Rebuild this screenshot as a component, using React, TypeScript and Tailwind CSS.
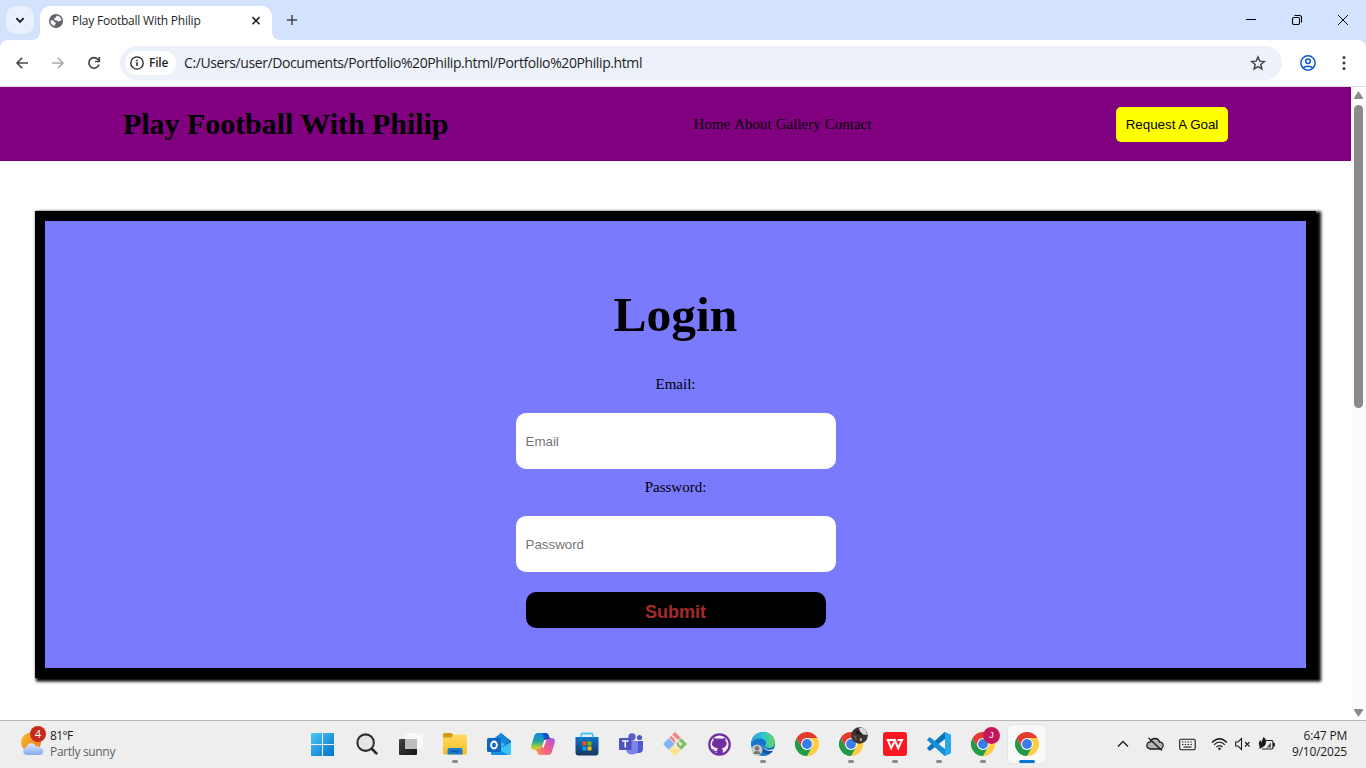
import type { ReactNode } from 'react';

const ui = "font-['Open_Sans','Noto_Sans',sans-serif]";
const serif = "font-['Liberation_Serif',serif]";
const arial = "font-['Liberation_Sans',sans-serif]";

function TabStrip() {
  return (
    <div className="flex h-10 shrink-0 items-start bg-[#d3e3fd]">
      <div className="ml-[6px] mt-[6px] flex h-7 w-7 items-center justify-center rounded-[10px] bg-[#e9f0fe]">
        <svg width="10" height="8" viewBox="0 0 10 8" fill="none" stroke="#1f1f1f" strokeWidth="1.9"><path d="M1.4 2.2L5 5.800 8.600 2.200" /></svg>
      </div>
      <div className="relative ml-[6px] mt-[6px] flex h-[34px] w-[232px] items-center rounded-t-[10px] bg-white pb-[5px] pl-[9px] pr-[10px]">
        <svg className="absolute -left-2 bottom-0" width="8" height="8"><path d="M8 0v8H0A8 8 0 0 0 8 0z" fill="#fff" /></svg>
        <svg className="absolute -right-2 bottom-0" width="8" height="8"><path d="M0 0v8h8A8 8 0 0 1 0 0z" fill="#fff" /></svg>
        <svg width="14" height="14" viewBox="0 0 14 14"><circle cx="7" cy="7" r="7" fill="#5f6368" /><path d="M8.6 1.7c-2 .2-1 1.5-2.3 2-1.1.4-1.5 1.4-.7 2.2.9.8 2.500-.1 3 1.200.3 1 1.600.6 1.900-.2l1.900-.3a5.500 5.500 0 0 0-3.800-4.900zM1.600 6.400c1.200-.2 3.300-.1 3.800 1.300.3.900 1.700.6 1.400 1.700-.3 1-1.300 1.100-1.300 2.700A5.500 5.500 0 0 1 1.600 6.400z" fill="#fff" /></svg>
        <span className={`ml-[9px] grow whitespace-nowrap text-[12px] tracking-[-0.22px] text-[#1f1f1f] ${ui}`}>Play Football With Philip</span>
        <svg width="12" height="12" viewBox="0 0 12 12" stroke="#1f1f1f" strokeWidth="1.6"><path d="M2.400 2l7.200 7.200M9.600 2L2.400 9.200" /></svg>
      </div>
      <svg className="ml-[14px] mt-[14px]" width="12" height="12" viewBox="0 0 12 12" stroke="#44474a" strokeWidth="1.5"><path d="M6 .9v10.200M.9 6h10.200" /></svg>
      <div className="grow" />
      <div className="mr-[17px] mt-[14px] flex gap-[34px]">
        <svg width="12" height="12"><path d="M1 5.500h10" stroke="#000" /></svg>
        <svg width="12" height="12" fill="none" stroke="#000" strokeWidth="1.1"><rect x="1.500" y="3.500" width="7" height="7" rx="1.500" /><path d="M3.500 1.500h5a2 2 0 0 1 2 2v5" /></svg>
        <svg width="12" height="12" stroke="#000" strokeWidth="1"><path d="M1 1l10 10M11 1L1 11" /></svg>
      </div>
    </div>
  );
}

function Toolbar() {
  return (
    <div className="flex h-[47px] shrink-0 bg-[#d3e3fd]">
      <div className="flex w-full items-center rounded-t-[8px] border-b border-[#dedfe2] bg-white">
        <svg className="ml-[15px]" width="14" height="14" viewBox="0 0 14 14" fill="none" stroke="#44474a" strokeWidth="1.600"><path d="M13 7H2.500M7.200 1.700L2 7l5.200 5.300" /></svg>
        <svg className="ml-[22px]" width="14" height="14" viewBox="0 0 14 14" fill="none" stroke="#a9abae" strokeWidth="1.600"><path d="M1 7h10.500M6.800 1.700L12 7l-5.200 5.300" /></svg>
        <svg className="ml-[22px]" width="14" height="14" viewBox="0 0 14 14" fill="none" stroke="#44474a" strokeWidth="1.700"><path d="M12 8.500a5.200 5.200 0 1 1-1-5L12.300 5" /><path d="M12.300 1v4.500H8" /></svg>
        <div className="ml-[19px] flex h-[34px] w-[1162px] items-center rounded-full bg-[#ecf1fa] pl-[5px] pr-[15px]">
          <div className="flex h-6 w-[51px] items-center rounded-full bg-white pl-[5px]">
            <svg width="14" height="14" viewBox="0 0 14 14" fill="none" stroke="#1f1f1f" strokeWidth="1.300"><circle cx="7" cy="7" r="6.200" /><path d="M7 6.200V10M7 3.800v1.400" strokeWidth="1.500" /></svg>
            <span className={`ml-[5px] text-[12px] font-semibold tracking-[-0.2px] text-[#1f1f1f] ${ui}`}>File</span>
          </div>
          <span className={`ml-[8px] grow whitespace-nowrap text-[14px] tracking-[-0.4px] pb-px text-[#1f1f1f] ${ui}`}>C:/Users/user/Documents/Portfolio%20Philip.html/Portfolio%20Philip.html</span>
          <svg width="18" height="18" viewBox="0 0 18 18" fill="none" stroke="#44474a" strokeWidth="1.500"><path d="M9 3l1.750 4.150 4.500.38-3.420 2.950 1.030 4.400L9 12.550 5.140 14.880l1.030-4.400-3.420-2.950 4.500-.38z" /></svg>
        </div>
        <svg className="ml-[18px]" width="16" height="16" viewBox="0 0 16 16" fill="none" stroke="#0b57d0" strokeWidth="1.500"><circle cx="8" cy="8" r="7.200" /><circle cx="8" cy="6.200" r="2.300" /><path d="M3 13c2.500-2.500 7.500-2.500 10 0" /></svg>
        <svg className="ml-[26px]" width="4" height="16" fill="#44474a"><circle cx="2" cy="2.500" r="1.600" /><circle cx="2" cy="8" r="1.600" /><circle cx="2" cy="13.500" r="1.600" /></svg>
      </div>
    </div>
  );
}

function Page() {
  return (
    <main className="flex min-w-0 grow flex-col bg-white text-black">
      <header className="flex h-[74px] shrink-0 items-center justify-between bg-[#800080] pl-[123px] pr-[123px]">
        <h1 className={`w-[326px] whitespace-nowrap text-[30px] font-bold leading-[34px] tracking-[-0.04px] ${serif}`}>Play Football With Philip</h1>
        <nav className={`flex gap-[4px] whitespace-nowrap text-[15px] ${serif}`}>
          <a>Home</a><a>About</a><a>Gallery</a><a>Contact</a>
        </nav>
        <button className={`h-[35px] w-[112px] whitespace-nowrap rounded-[5px] bg-[#ffff00] pt-[2px] text-[13.333px] ${arial}`}>Request A Goal</button>
      </header>
      <form className={`mx-[35px] mt-[50px] flex h-[467px] shrink-0 flex-col items-center border-[10px] border-black bg-[#7a7aff] shadow-[3px_1.5px_3px_2px_black] ${serif}`}>
        <h2 className="mt-[65px] text-[49.500px] font-bold leading-[58px]">Login</h2>
        <label className="mt-[31px] text-[15px] leading-[18px]">Email:</label>
        <input type="email" placeholder="Email" className={`mt-[20px] h-[56px] w-[320px] shrink-0 rounded-[10px] bg-white px-[10px] text-[13.333px] placeholder:text-[#757575] ${arial}`} />
        <label className="mt-[9px] text-[15px] leading-[18px]">Password:</label>
        <input type="password" placeholder="Password" className={`mt-[20px] h-[56px] w-[320px] shrink-0 rounded-[10px] bg-white px-[10px] text-[13.333px] placeholder:text-[#757575] ${arial}`} />
        <button type="button" className={`mt-[20px] flex h-[36px] w-[300px] shrink-0 items-center justify-center rounded-[10px] bg-black pt-[4px] text-[18px] font-bold text-[#a52a2a] ${arial}`}>Submit</button>
      </form>
    </main>
  );
}

function Scrollbar() {
  return (
    <div className="flex w-[15px] shrink-0 flex-col items-center bg-[#fcfcfc]">
      <svg className="mt-[4px] shrink-0" width="9" height="9"><path d="M3.800 1Q4.500 0 5.200 1L8.900 6.800Q9.300 8 8 8H1Q-.3 8 .1 6.800z" fill="#8b8b8b" /></svg>
      <div className="mt-[5px] h-[303px] w-[9px] shrink-0 rounded-full bg-[#8b8b8b]" />
      <div className="grow" />
      <svg className="mb-[3px] shrink-0" width="9" height="9"><path d="M3.800 8Q4.500 9 5.200 8L8.900 2.200Q9.300 1 8 1H1Q-.3 1 .1 2.200z" fill="#8b8b8b" /></svg>
    </div>
  );
}

function ChromeIcon() {
  return (
    <svg width="24" height="24" viewBox="0 0 48 48">
      <path d="M24 12H44.800A24 24 0 0 1 24 48L34.400 30z" fill="#ffcd40" />
      <path d="M3.200 12L13.600 30 24 36 34.400 30 24 48A24 24 0 0 1 3.200 12z" fill="#229a48" />
      <path d="M3.200 12A24 24 0 0 1 44.800 12H24L13.600 30z" fill="#e33b2e" />
      <circle cx="24" cy="24" r="12" fill="#fff" /><circle cx="24" cy="24" r="9.800" fill="#397ee8" />
    </svg>
  );
}

function Item({ children, state }: { children: ReactNode; state?: 'open' | 'active' }) {
  return (
    <div className={`relative flex h-[38px] w-[38px] shrink-0 items-center justify-center ${state === 'active' ? 'rounded-[4px] bg-[#f9f9f9] outline outline-[#e5e5e5]' : ''}`}>
      {children}
      {state === 'open' && <span className="absolute bottom-0 left-4 h-[3px] w-[6px] rounded-full bg-[#8a8a8a]" />}
      {state === 'active' && <span className="absolute bottom-0 left-[11px] h-[3px] w-4 rounded-full bg-[#0078d4]" />}
    </div>
  );
}

function Apps() {
  return (
    <div className="flex h-[38px] gap-[6px]">
      <Item>
        <svg className="mr-px" width="23" height="23"><defs><linearGradient id="win" x1="0" y1="0" x2="23" y2="23" gradientUnits="userSpaceOnUse"><stop stopColor="#4cc9f8" /><stop offset="1" stopColor="#0070cc" /></linearGradient></defs><path d="M0 0h11v11H0zM12 0h11v11H12zM0 12h11v11H0zM12 12h11v11H12z" fill="url(#win)" /></svg>
      </Item>
      <Item><svg width="22" height="22" viewBox="0 0 24 24" fill="none" stroke="#2b2b2b"><circle cx="10.500" cy="10.500" r="9" fill="#e4e6e8" strokeWidth="2.200" /><path d="M17.200 17.200l5 5" strokeWidth="3" strokeLinecap="round" /></svg></Item>
      <Item>
        <svg width="24" height="22"><defs><linearGradient id="task" x2="1" y2="1"><stop stopColor="#444" /><stop offset="1" stopColor="#161616" /></linearGradient></defs><rect y="6" width="18" height="16" rx="1" fill="url(#task)" /><rect x="6" width="18" height="16" rx="1" fill="#f8f8f8" /><path d="M6 6h12v10H6z" fill="#bdbdbd" /></svg>
      </Item>
      <Item state="open">
        <svg width="24" height="22"><defs><linearGradient id="folder" x2="0" y2="1"><stop stopColor="#ffda62" /><stop offset="1" stopColor="#f9bd23" /></linearGradient></defs><path d="M0 1.500Q0 0 1.500 0H8.500l2 2.500V8H0z" fill="#d99a0b" /><path d="M0 4.500h8.500l2-3h12Q24 1.500 24 3v17q0 1.500-1.500 1.500h-21Q0 21.500 0 20z" fill="url(#folder)" /><path d="M4.500 21.500V17Q4.500 15 6.500 15h11Q19.500 15 19.500 17v4.500z" fill="#157bd1" /><path d="M8 18.500h8" stroke="#0b5799" strokeWidth="1.500" /></svg>
      </Item>
      <Item>
        <svg width="24" height="23"><path d="M4 8L14 0l10 8v11q0 3-3 3H6q-2 0-2-2z" fill="#0a5fb8" /><path d="M5 8L14 1l8 7-8 7z" fill="#37b5ef" /><path d="M14 1l8 7-4 3.500L9 5z" fill="#1688dc" /><path d="M24 9v10q0 3-3 3H6q-2 0-2-2l10-5z" fill="#38c5f4" /><path d="M4 12l17 10H6q-2 0-2-2z" fill="#178ee5" /><rect y="5" width="14" height="14" rx="1.500" fill="#0f65c4" /><ellipse cx="7" cy="12" rx="2.900" ry="3.500" fill="none" stroke="#fff" strokeWidth="1.900" /></svg>
      </Item>
      <Item>
        <svg width="24" height="22" viewBox="0 0 24 22"><defs><linearGradient id="copA" x1="0" y1="0" x2="0" y2="1"><stop stopColor="#1782e8" /><stop offset=".5" stopColor="#20a8a0" /><stop offset=".8" stopColor="#a7ca38" /><stop offset="1" stopColor="#f7c82c" /></linearGradient><linearGradient id="copB" x1="1" y1="0" x2="0" y2="1"><stop stopColor="#a259e9" /><stop offset=".5" stopColor="#f05b8d" /><stop offset="1" stopColor="#ff974e" /></linearGradient></defs><path d="M7 0h8q2 0 2.800 2.500L19 6h-3q-2 0-2.700 2L11 14.500Q10.200 17 8 17H4Q-1 17 .4 12L3 3.500Q4 0 7 0z" fill="url(#copA)" /><path d="M17 22H9q-2 0-2.800-2.500L5 16h3q2 0 2.700-2L13 7.500Q13.800 5 16 5h4q5 0 3.600 5L21 18.500Q20 22 17 22z" fill="url(#copB)" /><path d="M12 0h3q2 0 2.800 2.500L19 6h-3q-2 0-2.700 1.500z" fill="#164fc3" /><path d="M11 14l2.300-7h2L12.500 15z" fill="#fff" /></svg>
      </Item>
      <Item>
        <svg width="24" height="24"><defs><linearGradient id="store" x2="0" y2="1"><stop stopColor="#0b74c8" /><stop offset="1" stopColor="#16365f" /></linearGradient></defs><path d="M.5 5h23v15.500q0 3-3 3h-17q-3 0-3-3z" fill="url(#store)" /><path d="M6.200 5.500V3q0-1.500 1.500-1.500h8.600q1.500 0 1.500 1.500v2.500" fill="none" stroke="#43c4f2" strokeWidth="1.800" /><path d="M7.500 9.500h4v4h-4z" fill="#f25022" /><path d="M12.500 9.500h4v4h-4z" fill="#7fba00" /><path d="M7.500 14.500h4v4h-4z" fill="#00a4ef" /><path d="M12.500 14.500h4v4h-4z" fill="#ffb900" /></svg>
      </Item>
      <Item>
        <svg width="24" height="22"><circle cx="13" cy="4" r="3.700" fill="#5b5fc7" /><circle cx="20.500" cy="4.500" r="2.600" fill="#5059c9" /><path d="M17 8h7v7.500q0 4.500-4.500 4.500H17z" fill="#5059c9" /><path d="M7 8h12v7.500q0 6-6 6t-6-6z" fill="#7b83eb" /><rect y="5" width="12.500" height="12" rx="1" fill="#4b53bc" /><path d="M3 8h6.500M6.250 8v6.500" stroke="#fff" strokeWidth="1.500" /></svg>
      </Item>
      <Item>
        <svg width="24" height="24"><path d="M12 0L17.700 5.700 12 11.400 6.300 5.700z" fill="#f2877e" /><path d="M18.300 6.300L24 12l-5.700 5.700-5.700-5.700z" fill="#80be62" /><path d="M5.700 6.300L11.400 12l-5.700 5.700L0 12z" fill="#82b3fa" /><path d="M12 12.600l5.700 5.700L12 24l-5.700-5.700z" fill="#ffe18a" /><path d="M8.500 3l4.500 4.500V16M13 7.500l4.500 4.500" fill="none" stroke="#eee" strokeWidth="1.300" /><circle cx="13" cy="7.500" r="1.500" fill="#eee" /><circle cx="17.500" cy="12" r="1.500" fill="#eee" /><circle cx="13" cy="15.800" r="1.500" fill="#eee" /></svg>
      </Item>
      <Item>
        <svg width="23" height="23"><circle cx="11.500" cy="11.500" r="10.200" fill="#f7effa" stroke="#7030a0" strokeWidth="2.300" /><path d="M5.500 7.500V4.500l3 1.300q3-.8 6 0l3-1.300v3q2.300 3 .3 5.500-1 1.800-3.800 2.200.8.800.8 2.300v4H9v-2.300q-3.500.8-4.500-2-.5-.8-1-1.200 1.500-.3 2.500 1.300 1 1.300 3 .8 0-1.200.8-2.900-6.800-.8-5.600-5.700.2-1.200 1.300-2z" fill="#7030a0" /></svg>
      </Item>
      <Item state="open">
        <svg width="24" height="24"><defs><linearGradient id="edge" y2="0"><stop stopColor="#2aa0dc" /><stop offset=".5" stopColor="#2fc4d4" /><stop offset="1" stopColor="#62d85c" /></linearGradient></defs><circle cx="12" cy="12" r="12" fill="#1374c9" /><path d="M0 12C1 4 6 0 12 0c7 0 12 5 12 10 0 4-3 6-6 6-2.500 0-4-1-4-2 0-.8 1-1 1-3 0-2.500-3-4.500-6.500-4.500C4 6.500 1 9 0 12z" fill="url(#edge)" /><path d="M10 11c-2 5 2 10 12 7q-1 2-3 3.500C12 23 7 17 10 11z" fill="#1250a0" /><path d="M11.500 10.500q-1 5 5 7.200 4 .8 7-1.200l1 1-2 1Q17 20 14 17q-3.500-2.500-2.500-6.500z" fill="#eee" /><circle cx="6" cy="18" r="5.500" fill="#c8c6c4" /><circle cx="6" cy="16.300" r="2.200" fill="#767676" /><path d="M2.500 22q0-3 3.500-3t3.500 3z" fill="#767676" /></svg>
      </Item>
      <Item><ChromeIcon /></Item>
      <Item state="open"><ChromeIcon />
        <svg className="absolute left-[19px] top-[2px]" width="17" height="17"><circle cx="8.500" cy="8.500" r="8.300" fill="#3d312e" /><path d="M8 1Q13-.5 15.500 4.500L16 8l-4-.5-3-3z" fill="#d5d8db" /><path d="M2 8l3 1 1 4-2 0z" fill="#6b5049" /><path d="M9 11l2 .5-.5 3-2-1z" fill="#b9a9a2" /><path d="M4 3l5 2 3 3-6-1z" fill="#18191b" /></svg>
      </Item>
      <Item state="open">
        <svg width="24" height="24" fill="none"><rect width="24" height="24" rx="3" fill="#ff1720" /><path d="M12 8H4.800l3.400 8.200L12 8.500l3.200 7.700L19 8h-4.500" stroke="#fff" strokeWidth="2" /></svg>
      </Item>
      <Item state="open">
        <svg width="24" height="24"><path d="M18 0l6 2.700v18.600L18 24z" fill="#29a8ef" /><path d="M18 0v7L3.500 18.500Q2.800 19 2 18.400l-1.500-1.300q-.8-.8 0-1.500L17 .6z" fill="#0873bb" /><path d="M18 24v-7L3.500 5.500Q2.800 5 2 5.600L.5 6.900q-.8.800 0 1.500L17 23.400z" fill="#168dd5" /></svg>
      </Item>
      <Item state="open"><ChromeIcon />
        <span className={`absolute left-[19px] top-[2px] flex h-[17px] w-[17px] items-center justify-center rounded-full bg-[#c2185b] text-[9px] text-white ${arial}`}>J</span>
      </Item>
      <Item state="active"><ChromeIcon /></Item>
    </div>
  );
}

function Taskbar() {
  return (
    <footer className={`flex h-[48px] shrink-0 border-t border-[#b9b9b9] bg-[#eeeeee] ${ui}`}>
      <div className="flex w-[304px] pl-[20px] pt-[7px]">
        <div className="relative h-8 w-[26px]">
          <svg width="26" height="30"><defs><linearGradient id="sun" x2="1" y2="1"><stop stopColor="#f8bd2c" /><stop offset="1" stopColor="#ee7217" /></linearGradient><linearGradient id="cloud" x2="0" y2="1"><stop stopColor="#dce9fc" /><stop offset="1" stopColor="#83aaf0" /></linearGradient></defs><circle cx="11" cy="14.500" r="10" fill="url(#sun)" /><path d="M6.500 27a4 4 0 0 1-.3-7.800Q7.500 15 11.500 15.200q3.500.2 4.500 3a4 4 0 0 1 4 1.300A3.800 3.800 0 0 1 20 27z" fill="url(#cloud)" /></svg>
          <span className="absolute -top-[2px] left-[10px] flex h-4 w-4 items-center justify-center rounded-full bg-[#c42b1c] text-[11px] text-white">4</span>
        </div>
        <div className="ml-[4px] text-[12px] leading-4 text-[#1b1b1b]"><div className="tracking-[-0.6px]">81°F</div><div className="tracking-[-0.33px] text-[#5f5f5f]">Partly sunny</div></div>
      </div>
      <div className="pt-[4px]"><Apps /></div>
      <div className="grow" />
      <div className="flex items-center pb-[1px] pr-[19px]">
        <svg width="12" height="12" fill="none" stroke="#1b1b1b" strokeWidth="1.300"><path d="M1 8.500l5-5 5 5" /></svg>
        <svg className="ml-[17px]" width="18" height="16" fill="none" stroke="#1b1b1b" strokeWidth="1.300"><path d="M4.500 13a3.500 3.500 0 0 1-.3-7Q5.500 2.500 9 2.500q3.500 0 4.500 3.500a3.500 3.500 0 0 1 .3 7z" fill="#b5b5b5" /><path d="M2.500 2l13.500 12.500" /></svg>
        <svg className="ml-[15px]" width="17" height="13" fill="none" stroke="#1b1b1b" strokeWidth="1.100"><rect x=".7" y="1.200" width="15.500" height="10.500" rx="1.500" /><path d="M3 4h11M3 6.500h11" strokeDasharray="1.400 1.400" /><path d="M4.500 9h8" /></svg>
        <svg className="ml-[15px]" width="17" height="14" fill="none" stroke="#1b1b1b" strokeWidth="1.200"><path d="M1 5.500q7.500-7.500 15 0" /><path d="M3.200 7.700q5.300-5 10.600 0M5.500 10q3-2.800 6 0" /><circle cx="8.500" cy="11.800" r="1.200" fill="#1b1b1b" stroke="none" /></svg>
        <svg className="ml-[7px]" width="17" height="14" fill="none" stroke="#1b1b1b" strokeWidth="1.100"><path d="M.600 5h2.400L6.500 1.500v11L3 9H.600z" /><path d="M10 5l4.500 4.500M14.500 5L10 9.500" /></svg>
        <svg className="ml-[6px]" width="18" height="15" fill="none" stroke="#1b1b1b" strokeWidth="1.200"><path d="M8 3.500h5.500q1.500 0 1.500 1.500v5.500q0 1.500-1.500 1.500H4" /><path d="M16 6v3.500" strokeWidth="1.800" /><path d="M8.500 10.500l4.500-5v5z" fill="#555" stroke="none" /><path d="M5.500 0c3 2 3.500 6 1 9L1.500 12V9Q-.5 5 3 3v3z" fill="#1b1b1b" stroke="none" /></svg>
        <div className="ml-[11px] w-[60px] whitespace-nowrap text-right text-[12px] leading-4 tracking-[-0.2px] text-[#1b1b1b]"><div>6:47 PM</div><div>9/10/2025</div></div>
      </div>
    </footer>
  );
}

export default function App() {
  return (
    <div className="flex h-[768px] w-[1366px] flex-col overflow-hidden bg-white">
      <TabStrip />
      <Toolbar />
      <div className="flex min-h-0 grow overflow-hidden"><Page /><Scrollbar /></div>
      <Taskbar />
    </div>
  );
}
